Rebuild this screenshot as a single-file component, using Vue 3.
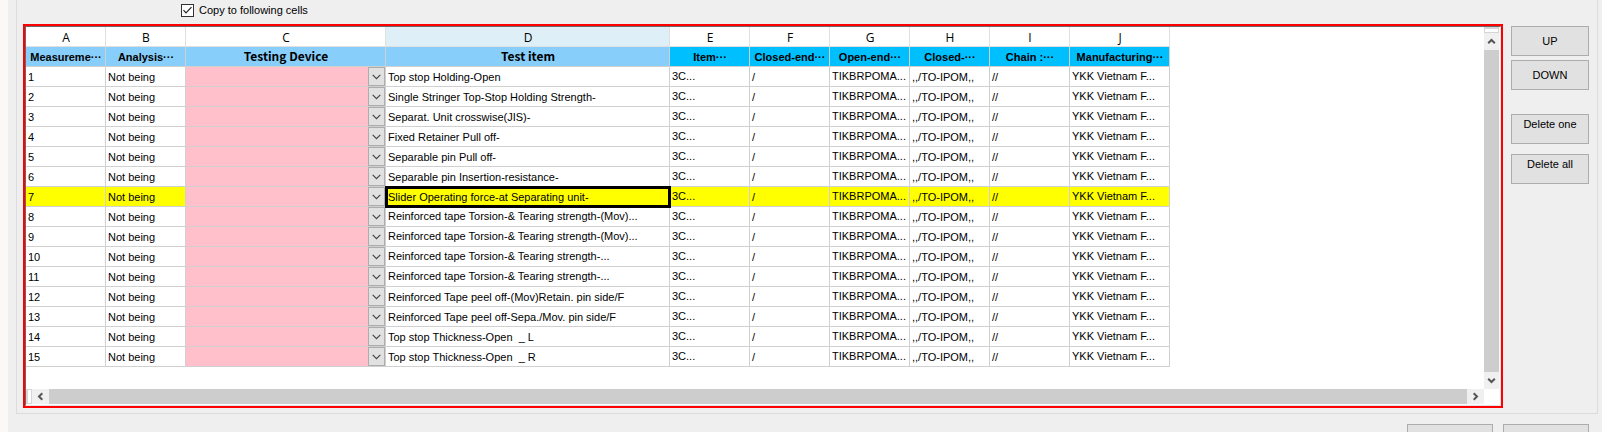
<script setup>
import { ref } from 'vue'

const copyDown = ref(true)
const selectedRow = 7

const columns = [
  { letter: 'A', title: 'Measureme···', tone: 'light', width: 'w-std' },
  { letter: 'B', title: 'Analysis···', tone: 'light', width: 'w-std' },
  { letter: 'C', title: 'Testing Device', tone: 'light roomy', width: 'w-device' },
  { letter: 'D', title: 'Test item', tone: 'light roomy', width: 'w-item' },
  { letter: 'E', title: 'Item···', tone: 'deep', width: 'w-std' },
  { letter: 'F', title: 'Closed-end···', tone: 'deep', width: 'w-std' },
  { letter: 'G', title: 'Open-end···', tone: 'deep', width: 'w-std' },
  { letter: 'H', title: 'Closed-···', tone: 'deep', width: 'w-std' },
  { letter: 'I', title: 'Chain :···', tone: 'deep', width: 'w-std' },
  { letter: 'J', title: 'Manufacturing···', tone: 'deep', width: 'w-wide' }
]

const items = [
  'Top stop Holding-Open',
  'Single Stringer Top-Stop Holding Strength-',
  'Separat. Unit crosswise(JIS)-',
  'Fixed Retainer Pull off-',
  'Separable pin Pull off-',
  'Separable pin Insertion-resistance-',
  'Slider Operating force-at Separating unit-',
  'Reinforced tape Torsion-& Tearing strength-(Mov)...',
  'Reinforced tape Torsion-& Tearing strength-(Mov)...',
  'Reinforced tape Torsion-& Tearing strength-...',
  'Reinforced tape Torsion-& Tearing strength-...',
  'Reinforced Tape peel off-(Mov)Retain. pin side/F',
  'Reinforced Tape peel off-Sepa./Mov. pin side/F',
  'Top stop Thickness-Open\u00a0 _ L',
  'Top stop Thickness-Open\u00a0 _ R'
]
const rows = items.map((item, i) => ({ no: i + 1, item, clipped: item.endsWith('...') }))
</script>

<template>
  <div class="window">
    <section class="group">
      <div class="options">
        <label class="check">
          <input v-model="copyDown" type="checkbox">
          <svg class="tick" viewBox="0 0 13 13" aria-hidden="true"><path d="M2.5 6.2 5 8.8 10.5 3.2" /></svg>
          <span>Copy to following cells</span>
        </label>
      </div>
      <div class="body">
        <div class="frame">
          <div class="sheet">
            <div class="view">
              <table>
                <colgroup>
                  <col v-for="c in columns" :key="c.letter" :class="c.width">
                </colgroup>
                <thead>
                  <tr class="letters">
                    <th v-for="c in columns" :key="c.letter" :class="{ current: c.letter === 'D' }">{{ c.letter }}</th>
                  </tr>
                  <tr class="titles">
                    <th v-for="c in columns" :key="c.letter" :class="c.tone">{{ c.title }}</th>
                  </tr>
                </thead>
                <tbody>
                  <tr v-for="r in rows" :key="r.no" :class="{ active: r.no === selectedRow }">
                    <td>{{ r.no }}</td>
                    <td>Not being</td>
                    <td class="device">
                      <div class="combo">
                        <select :aria-label="'Testing device, row ' + r.no"><option></option></select>
                        <span class="drop"><svg viewBox="0 0 9 6" aria-hidden="true"><path d="M.7.8 4.5 4.6 8.3.8" /></svg></span>
                      </div>
                    </td>
                    <td :class="{ clipped: r.clipped, cursor: r.no === selectedRow }">{{ r.item }}</td>
                    <td class="clipped">3C...</td>
                    <td>/</td>
                    <td class="clipped">TIKBRPOMA...</td>
                    <td>,,/TO-IPOM,,</td>
                    <td>//</td>
                    <td class="clipped">YKK Vietnam F...</td>
                  </tr>
                </tbody>
              </table>
            </div>
            <div class="bar vertical">
              <span class="split"></span>
              <button type="button" aria-label="Scroll up"><svg viewBox="0 0 9 9"><path d="M1.2 6.3 4.5 3 7.8 6.3" /></svg></button>
              <span class="thumb"></span>
              <button type="button" aria-label="Scroll down"><svg viewBox="0 0 9 9"><path d="M1.2 2.7 4.5 6 7.8 2.7" /></svg></button>
            </div>
            <div class="bar horizontal">
              <span class="split"></span>
              <button type="button" aria-label="Scroll left"><svg viewBox="0 0 9 9"><path d="M6.3 1.2 3 4.5 6.3 7.8" /></svg></button>
              <span class="thumb"></span>
              <button type="button" aria-label="Scroll right"><svg viewBox="0 0 9 9"><path d="M2.7 1.2 6 4.5 2.7 7.8" /></svg></button>
            </div>
          </div>
        </div>
        <div class="actions">
          <div class="pair move">
            <button type="button" class="push">UP</button>
            <button type="button" class="push">DOWN</button>
          </div>
          <div class="pair remove">
            <button type="button" class="push">Delete one</button>
            <button type="button" class="push">Delete all</button>
          </div>
        </div>
      </div>
    </section>
    <div class="footer">
      <button type="button" class="push" aria-label="Confirm"></button>
      <button type="button" class="push" aria-label="Close"></button>
    </div>
  </div>
</template>

<style>
body { margin: 0; }
</style>

<style scoped>
* { box-sizing: border-box; }
.window {
  display: flex;
  flex-direction: column;
  height: 100vh;
  overflow: hidden;
  border-left: 8px solid #faf9f8;
  background: #efefef;
  color: #000;
  font: 11px/16px "Liberation Sans", Arial, sans-serif;
}
.group {
  margin: 0 4px 0 8px;
  padding: 0 8px 5px 6px;
  border: solid #dcdcdc;
  border-width: 0 1px 1px;
}
.options { height: 24px; padding: 2px 0 0 158px; }
.check { display: inline-grid; grid-template-columns: 13px auto; column-gap: 5px; align-items: center; }
.check input { grid-area: 1 / 1; appearance: none; width: 13px; height: 13px; margin: 0; border: 1px solid #333; background: #fff; }
.tick { grid-area: 1 / 1; width: 13px; height: 13px; fill: none; stroke: #222; stroke-width: 1.2; pointer-events: none; visibility: hidden; }
.check input:checked + .tick { visibility: visible; }

.body { display: flex; gap: 8px; }
.frame { flex: 1; min-width: 0; border: 2px solid #f00; }
.sheet {
  display: grid;
  grid-template-columns: minmax(0, 1fr) 16px;
  grid-template-rows: auto 16px;
  border: 1px solid #e3e3e3;
  border-top-color: #696969;
  border-left-color: #696969;
  background: #fff;
}
.view { overflow: hidden; padding-bottom: 22px; }
table { table-layout: fixed; width: 1144px; border-collapse: separate; border-spacing: 0; }
.w-std { width: 80px; }
.w-device { width: 200px; }
.w-item { width: 284px; }
.w-wide { width: 100px; }
th, td {
  height: 20px;
  padding: 2px 0 0 2px;
  border: solid #d0d0d0;
  border-width: 0 1px 1px 0;
  overflow: hidden;
  white-space: nowrap;
  line-height: 16px;
  text-align: left;
  vertical-align: top;
  font-weight: 400;
}
.letters th { padding: 3px 0 0 1px; text-align: center; font-family: "Open Sans", sans-serif; font-size: 12px; border-color: #e0e0e0; }
.letters .current { background: #dfeff8; }
.titles th { padding: 2px 0 0 1px; text-align: center; font-weight: 700; }
.titles .roomy { padding-top: 1px; font-family: "Noto Sans CJK JP", sans-serif; font-size: 12px; }
.light { background: #87cefa; }
.deep { background: #00bfff; }
.clipped { padding-top: 1px; }
.active td { background: #ff0; }
td.device, .active td.device { padding: 0; background: #ffc0cb; }
.cursor { outline: 3px solid #000; outline-offset: -2px; }
.combo { display: grid; height: 19px; }
.combo select { grid-area: 1 / 1; appearance: none; width: 100%; height: 19px; padding: 0; border: 0; background: transparent; }
.drop {
  grid-area: 1 / 1;
  justify-self: end;
  display: grid;
  place-items: center;
  width: 17px;
  height: 19px;
  border: 1px solid #adadad;
  background: #e1e1e1;
  pointer-events: none;
}
.drop svg { width: 9px; height: 6px; fill: none; stroke: #444; stroke-width: 1.2; }

.bar { display: flex; background: #fff; }
.bar.vertical { flex-direction: column; width: 15px; }
.bar.horizontal { height: 15px; }
.bar button { display: grid; place-items: center; flex: none; width: 17px; height: 15px; padding: 0; border: 0; background: #f0f0f0; }
.bar.vertical button { width: 15px; height: 17px; }
.bar svg { width: 9px; height: 9px; fill: none; stroke: #555; stroke-width: 2; }
.thumb { flex: 1; background: #cdcdcd; }
.split { flex: none; width: 6px; height: 15px; border: 1px solid #d5d5d5; border-width: 1px 1px 1px 2px; background: #fff; }
.vertical .split { width: 15px; height: 6px; border-width: 2px 1px 1px; }

.actions { display: flex; flex-direction: column; gap: 24px; width: 78px; padding-top: 2px; }
.pair { display: flex; flex-direction: column; gap: 4px; }
.remove { gap: 10px; }
.push { width: 100%; height: 30px; padding: 0; border: 1px solid #adadad; background: #e1e1e1; color: #000; font: inherit; }
.remove .push { padding-bottom: 10px; }
.footer { display: flex; justify-content: flex-end; gap: 10px; padding: 10px 13px 0 0; }
.footer .push { width: 86px; }
</style>
